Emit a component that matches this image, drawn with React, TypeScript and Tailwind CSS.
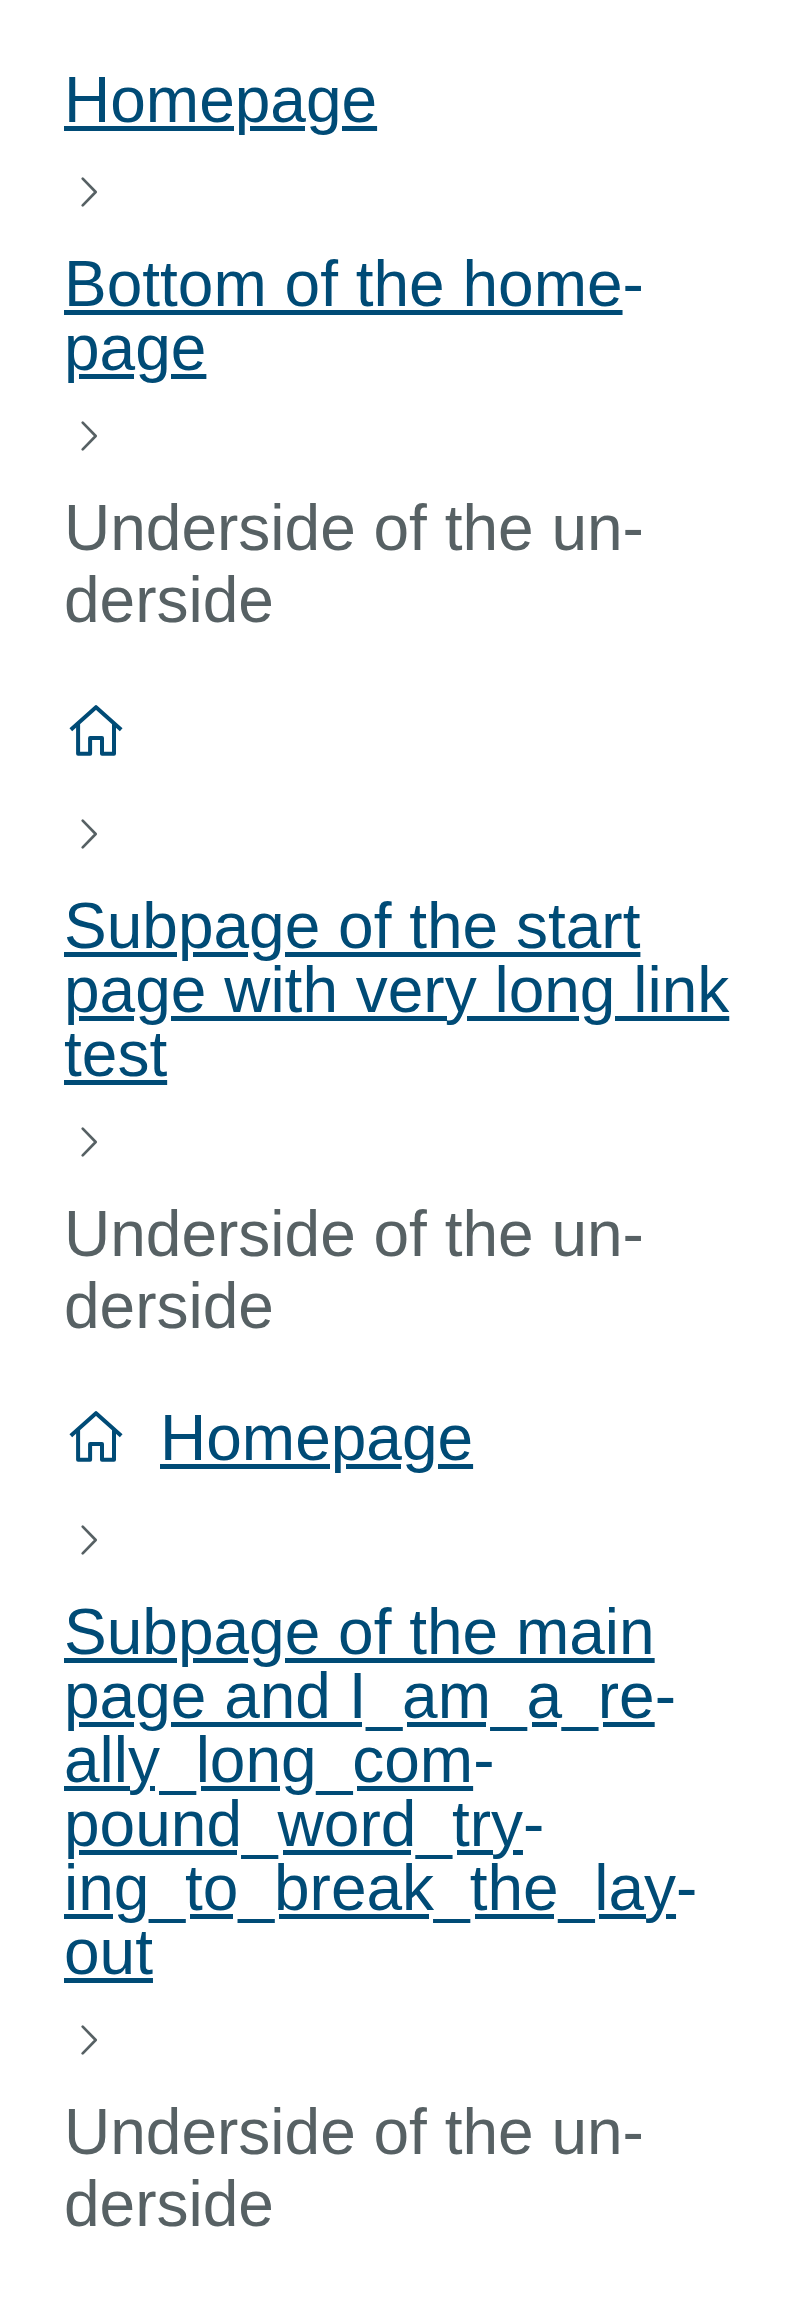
import type { ReactNode } from "react";

function Chevron() {
  return (
    <svg
      className="my-8 block h-12 w-12 text-[#576164]"
      viewBox="0 0 48 48"
      fill="none"
      stroke="currentColor"
      strokeWidth="2.7"
      strokeLinecap="round"
      strokeLinejoin="round"
      aria-hidden="true"
    >
      <path d="M18.7 10.6 31.7 24 18.7 37.4" />
    </svg>
  );
}

function HomeIcon() {
  return (
    <svg
      className="block h-16 w-16 shrink-0 text-[#004b76]"
      viewBox="0 0 64 64"
      fill="none"
      stroke="currentColor"
      strokeWidth="4"
      strokeLinejoin="round"
      aria-hidden="true"
    >
      <path d="M6.8 29.8 32 7.2l25.2 22.6" />
      <path d="M14.1 24v29.7h12V38.1h11.9v15.6h12V24" />
    </svg>
  );
}

function Crumb({ children }: { children: ReactNode }) {
  return (
    <a
      href="#"
      className="block whitespace-nowrap text-[64px] leading-[64px] text-[#004b76] underline decoration-[5px] underline-offset-[4px]"
    >
      {children}
    </a>
  );
}

/* Line-end hyphen that stays outside the link underline. */
function Break() {
  return (
    <>
      <span className="inline-block">-</span>
      <br />
    </>
  );
}

/* Underscore that interrupts the link underline, with a gap on both sides. */
function Underscore({ afterDescender = false }: { afterDescender?: boolean }) {
  return (
    <span
      className={
        afterDescender
          ? "relative isolate inline-block before:absolute before:top-[58px] before:right-[-5px] before:left-0 before:-z-10 before:h-[5px] before:bg-white before:content-['']"
          : "relative isolate inline-block before:absolute before:top-[58px] before:right-[-5px] before:left-[-5px] before:-z-10 before:h-[5px] before:bg-white before:content-['']"
      }
    >
      _
    </span>
  );
}

function Current() {
  return (
    <span className="block text-[64px] leading-[72px] text-[#576164]">
      Underside of the un&shy;derside
    </span>
  );
}

export default function App() {
  return (
    <div
      lang="en"
      className="flex min-h-[2304px] w-full flex-col gap-16 bg-white p-16 font-['Liberation_Sans',Arial,sans-serif]"
    >
      <nav>
        <div className="py-1">
          <Crumb>Homepage</Crumb>
        </div>
        <Chevron />
        <div className="pt-1">
          <Crumb>
            Bottom of the home
            <Break />
            page
          </Crumb>
        </div>
        <Chevron />
        <Current />
      </nav>

      <nav>
        <a href="#" aria-label="Homepage" className="block h-[78px]">
          <HomeIcon />
        </a>
        <Chevron />
        <div className="pt-1">
          <Crumb>
            Subpage of the start
            <br />
            page with very long link
            <br />
            test
          </Crumb>
        </div>
        <Chevron />
        <Current />
      </nav>

      <nav>
        <div className="flex h-[78px] items-start gap-8">
          <HomeIcon />
          <Crumb>Homepage</Crumb>
        </div>
        <Chevron />
        <div className="pt-1">
          <Crumb>
            Subpage of the main
            <br />
            page and I<Underscore />am<Underscore />a<Underscore />re
            <Break />
            ally<Underscore />long<Underscore afterDescender />com
            <Break />
            pound<Underscore />word<Underscore />try
            <Break />
            ing<Underscore afterDescender />to<Underscore />break<Underscore />the<Underscore />lay
            <Break />
            out
          </Crumb>
        </div>
        <Chevron />
        <Current />
      </nav>
    </div>
  );
}
